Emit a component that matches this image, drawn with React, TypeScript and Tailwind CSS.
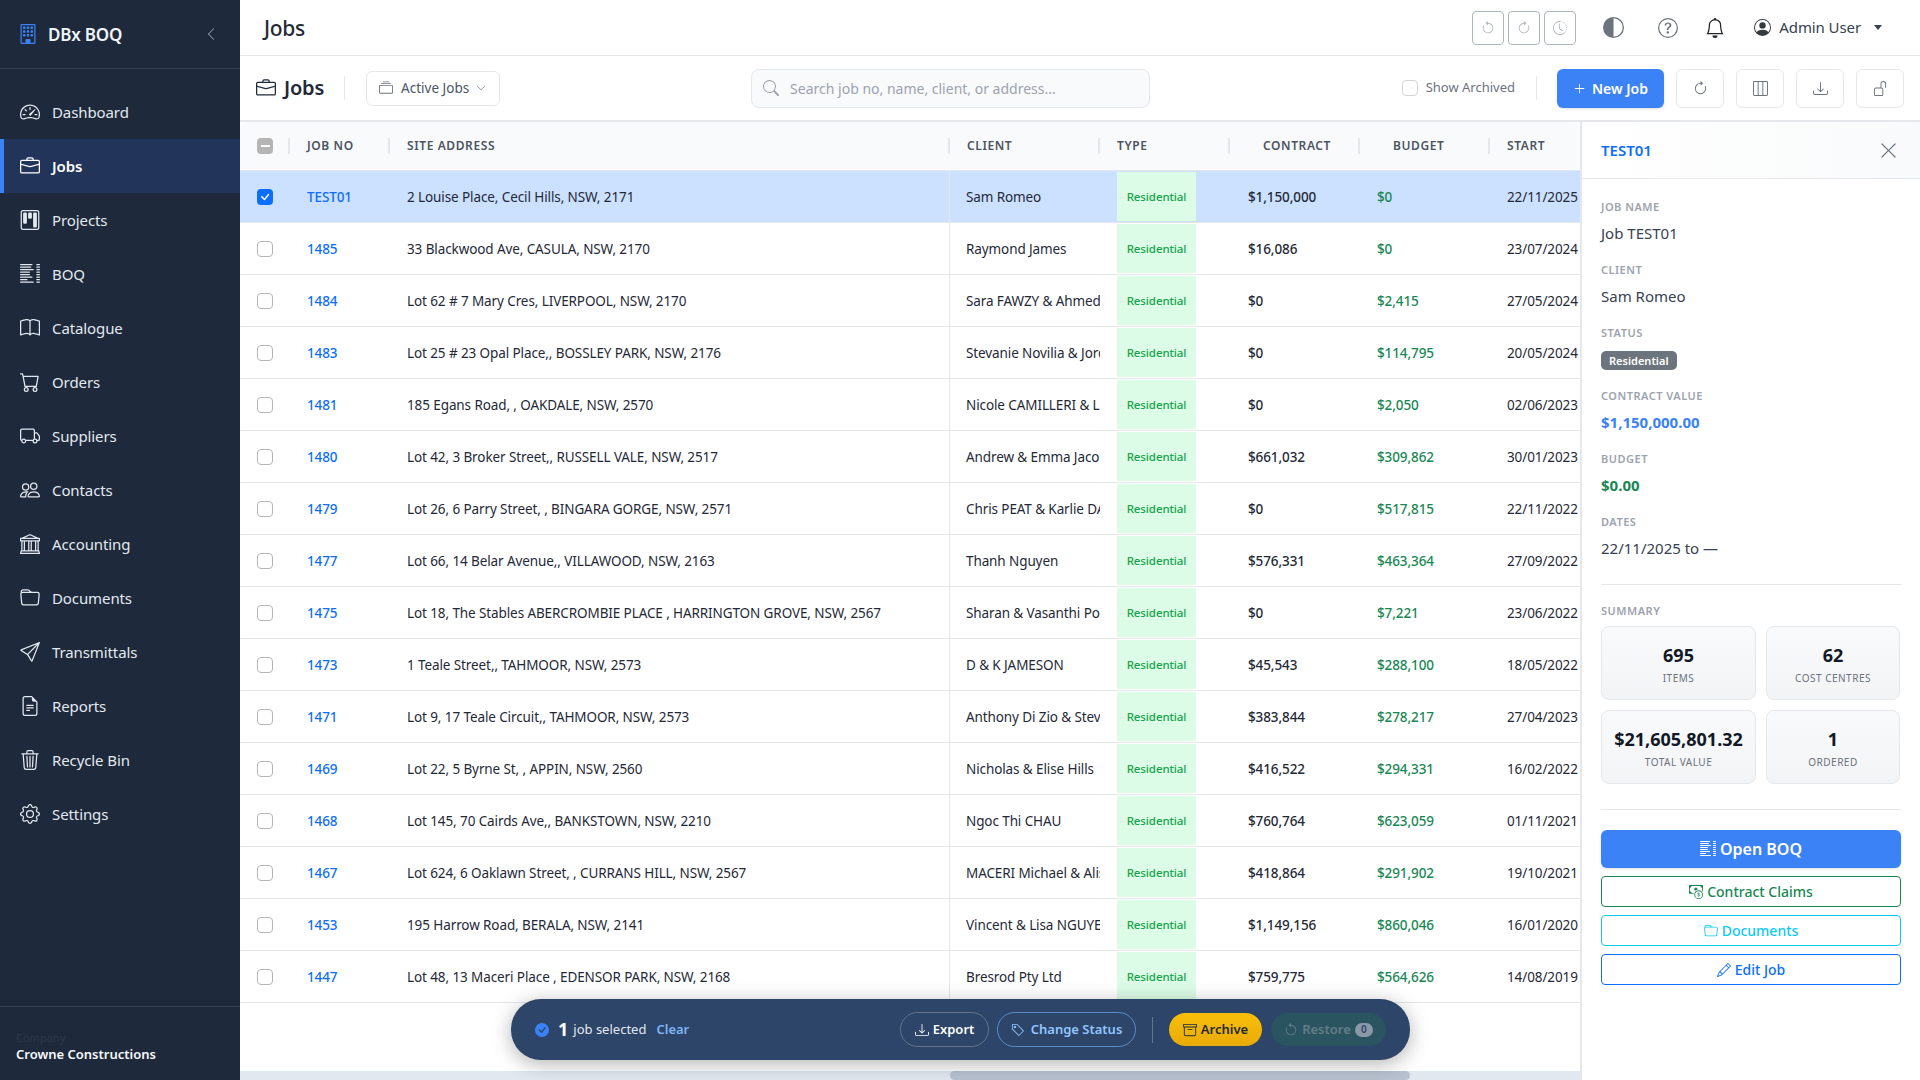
import React from "react";
import {
  BsSpeedometer2, BsBriefcase, BsKanban, BsListColumns, BsBook, BsCart, BsTruck, BsPeople, BsBank, BsFolder,
  BsSend, BsFileEarmarkText, BsTrash3, BsGear, BsBuilding, BsChevronLeft, BsChevronDown, BsCollection, BsSearch,
  BsArrowCounterclockwise, BsArrowClockwise, BsClockHistory, BsCircleHalf, BsQuestionCircle, BsBell, BsPersonCircle,
  BsPlusLg, BsLayoutThreeColumns, BsDownload, BsUnlock, BsXLg, BsCashCoin, BsPencil, BsTag, BsArchive,
  BsCheckCircleFill, BsCheck,
} from "react-icons/bs";

const navItems = [
  { label: "Dashboard", icon: BsSpeedometer2 },
  { label: "Jobs", icon: BsBriefcase, active: true },
  { label: "Projects", icon: BsKanban },
  { label: "BOQ", icon: BsListColumns },
  { label: "Catalogue", icon: BsBook },
  { label: "Orders", icon: BsCart },
  { label: "Suppliers", icon: BsTruck },
  { label: "Contacts", icon: BsPeople },
  { label: "Accounting", icon: BsBank },
  { label: "Documents", icon: BsFolder },
  { label: "Transmittals", icon: BsSend },
  { label: "Reports", icon: BsFileEarmarkText },
  { label: "Recycle Bin", icon: BsTrash3 },
  { label: "Settings", icon: BsGear },
];

const jobs = [
  ["TEST01", "2 Louise Place, Cecil Hills, NSW, 2171", "Sam Romeo", "$1,150,000", "$0", "22/11/2025"],
  ["1485", "33 Blackwood Ave, CASULA, NSW, 2170", "Raymond James", "$16,086", "$0", "23/07/2024"],
  ["1484", "Lot 62 # 7 Mary Cres, LIVERPOOL, NSW, 2170", "Sara FAWZY & Ahmed Ali", "$0", "$2,415", "27/05/2024"],
  ["1483", "Lot 25 # 23 Opal Place,, BOSSLEY PARK, NSW, 2176", "Stevanie Novilia & Jordan", "$0", "$114,795", "20/05/2024"],
  ["1481", "185 Egans Road, , OAKDALE, NSW, 2570", "Nicole CAMILLERI & Luke", "$0", "$2,050", "02/06/2023"],
  ["1480", "Lot 42, 3 Broker Street,, RUSSELL VALE, NSW, 2517", "Andrew & Emma Jacobs", "$661,032", "$309,862", "30/01/2023"],
  ["1479", "Lot 26, 6 Parry Street, , BINGARA GORGE, NSW, 2571", "Chris PEAT & Karlie DAY", "$0", "$517,815", "22/11/2022"],
  ["1477", "Lot 66, 14 Belar Avenue,, VILLAWOOD, NSW, 2163", "Thanh Nguyen", "$576,331", "$463,364", "27/09/2022"],
  ["1475", "Lot 18, The Stables ABERCROMBIE PLACE , HARRINGTON GROVE, NSW, 2567", "Sharan & Vasanthi Pon", "$0", "$7,221", "23/06/2022"],
  ["1473", "1 Teale Street,, TAHMOOR, NSW, 2573", "D & K JAMESON", "$45,543", "$288,100", "18/05/2022"],
  ["1471", "Lot 9, 17 Teale Circuit,, TAHMOOR, NSW, 2573", "Anthony Di Zio & Steven", "$383,844", "$278,217", "27/04/2023"],
  ["1469", "Lot 22, 5 Byrne St, , APPIN, NSW, 2560", "Nicholas & Elise Hills", "$416,522", "$294,331", "16/02/2022"],
  ["1468", "Lot 145, 70 Cairds Ave,, BANKSTOWN, NSW, 2210", "Ngoc Thi CHAU", "$760,764", "$623,059", "01/11/2021"],
  ["1467", "Lot 624, 6 Oaklawn Street, , CURRANS HILL, NSW, 2567", "MACERI Michael & Alison", "$418,864", "$291,902", "19/10/2021"],
  ["1453", "195 Harrow Road, BERALA, NSW, 2141", "Vincent & Lisa NGUYEN", "$1,149,156", "$860,046", "16/01/2020"],
  ["1447", "Lot 48, 13 Maceri Place , EDENSOR PARK, NSW, 2168", "Bresrod Pty Ltd", "$759,775", "$564,626", "14/08/2019"],
];

const gridCols = "grid grid-cols-[50px_100px_560px_150px_130px_130px_130px_130px]";

const Sidebar = () => (
  <aside className="w-[240px] shrink-0 bg-[#1e293b] flex flex-col text-[#e2e8f0]">
    <div className="h-[69px] border-b border-[#334155] flex items-center pl-[18px] pr-[22px]">
      <BsBuilding className="text-[#3b82f6] text-[20px]" />
      <span className="ml-[10px] pt-[1px] text-[17px] font-semibold text-[#f1f5f9] tracking-[-0.2px]">DBx BOQ</span>
      <BsChevronLeft className="ml-auto text-[#94a3b8] text-[14px]" />
    </div>
    <nav className="pt-4 flex-1">
      {navItems.map((item) => {
        const Icon = item.icon;
        return (
          <div
            key={item.label}
            className={
              item.active
                ? "h-[54px] flex items-center gap-[12px] pl-[20px] bg-[#22345a] border-l-4 border-[#3b82f6] text-white font-semibold"
                : "h-[54px] flex items-center gap-[12px] pl-[20px] border-l-4 border-transparent text-[#e2e8f0]"
            }
          >
            <Icon className="text-[20px] shrink-0 -ml-[4px]" />
            <span className="text-[15px] tracking-[-0.1px]">{item.label}</span>
          </div>
        );
      })}
    </nav>
    <div className="h-[74px] border-t border-[#334155] px-4 pt-[24px] shrink-0">
      <div className="text-[11px] leading-[14px] text-[#2c394c]">Company</div>
      <div className="text-[13px] leading-[18px] font-semibold text-[#f8fafc]">Crowne Constructions</div>
    </div>
  </aside>
);

const TopBar = () => (
  <header className="h-[56px] shrink-0 bg-white border-b border-[#e5e7eb] flex items-center pl-[24px] pr-[38px]">
    <h1 className="pt-[2px] text-[21px] font-medium text-[#1f2937] tracking-[-0.3px]">Jobs</h1>
    <div className="ml-auto flex items-center">
      <div className="flex gap-[4px]">
        {[BsArrowCounterclockwise, BsArrowClockwise, BsClockHistory].map((Icon, i) => (
          <button key={i} className="w-[32px] h-[34px] rounded-[4px] border border-[#adb5bd] flex items-center justify-center text-[#b5bac0] text-[14px]">
            <Icon />
          </button>
        ))}
      </div>
      <BsCircleHalf className="ml-[27px] text-[21px] text-[#6c757d]" />
      <BsQuestionCircle className="ml-[34px] text-[20px] text-[#6c757d]" />
      <BsBell className="ml-[27px] text-[20px] text-[#212529]" />
      <BsPersonCircle className="ml-[29px] text-[17px] text-[#343a40]" />
      <span className="ml-[8px] text-[15px] text-[#374151] tracking-[-0.1px]">Admin User</span>
      <span className="ml-[13px] border-x-[4px] border-t-[5px] border-x-transparent border-t-[#374151]" />
    </div>
  </header>
);

const ToolButton = ({ icon: Icon }: { icon: React.ElementType }) => (
  <button className="w-[48px] h-[39px] rounded-[6px] border border-[#e5e7eb] bg-white flex items-center justify-center text-[#6b7280] text-[15px]">
    <Icon />
  </button>
);

const Toolbar = () => (
  <div className="h-[66px] shrink-0 bg-white border-b-2 border-[#e5e7eb] flex items-center pl-[16px] pr-[16px]">
    <BsBriefcase className="text-[20px] text-[#1f2937]" />
    <span className="ml-[8px] text-[20px] font-semibold text-[#1f2937] tracking-[-0.2px]">Jobs</span>
    <div className="ml-[20px] w-px h-[24px] bg-[#e5e7eb]" />
    <button className="ml-[21px] w-[134px] h-[35px] rounded-[6px] border border-[#e5e7eb] bg-white flex items-center pl-[12px] text-[13.5px] text-[#4b5563]">
      <BsCollection className="text-[14px] text-[#6b7280]" />
      <span className="ml-[8px]">Active Jobs</span>
      <BsChevronDown className="ml-[7px] text-[10px] text-[#6b7280]" />
    </button>
    <div className="ml-[251px] w-[399px] h-[39px] rounded-[8px] border border-[#e5e7eb] bg-[#f9fafb] flex items-center pl-[11px] text-[14px] text-[#9ca3af]">
      <BsSearch className="text-[16px] text-[#9ca3af]" />
      <span className="ml-[11px]">Search job no, name, client, or address...</span>
    </div>
    <div className="ml-auto flex items-center">
      <span className="w-[16px] h-[16px] rounded-[4px] border border-[#d1d5db] bg-white" />
      <span className="ml-[8px] text-[13px] text-[#6b7280]">Show Archived</span>
      <div className="ml-[21px] w-px h-[24px] bg-[#e5e7eb]" />
      <button className="ml-[20px] w-[107px] h-[39px] rounded-[6px] bg-[#3b82f6] text-white text-[14px] font-semibold flex items-center justify-center gap-[6px] shadow-sm">
        <BsPlusLg className="text-[13px]" />
        New Job
      </button>
      <div className="ml-[12px] flex gap-[12px]">
        <ToolButton icon={BsArrowClockwise} />
        <ToolButton icon={BsLayoutThreeColumns} />
        <ToolButton icon={BsDownload} />
        <ToolButton icon={BsUnlock} />
      </div>
    </div>
  </div>
);

const Handle = () => <span className="absolute right-0 top-[16px] w-[2px] h-[16px] bg-[#e5e7eb]" />;

const HeadCell = ({ label, cls = "pl-[17px]", handle = true }: { label?: string; cls?: string; handle?: boolean }) => (
  <div className={`relative flex items-center text-[12px] font-semibold text-[#4b5563] tracking-[0.6px] ${cls}`}>
    {label}
    {handle && <Handle />}
  </div>
);

const JobTable = () => (
  <div className="relative flex-1 min-w-0 overflow-hidden bg-white">
    <div className="rounded-tl-[8px] rounded-tr-[8px] overflow-hidden">
      <div className={`${gridCols} h-[49px] bg-[#f9fafb] border-b border-[#e5e7eb]`}>
        <div className="relative flex items-center pl-[17px]">
          <span className="w-[16px] h-[16px] rounded-[4px] bg-[#b5b5b5] flex items-center justify-center">
            <span className="w-[9px] h-[2px] bg-white" />
          </span>
          <Handle />
        </div>
        <HeadCell label="JOB NO" />
        <HeadCell label="SITE ADDRESS" />
        <HeadCell label="CLIENT" />
        <HeadCell label="TYPE" />
        <HeadCell label="CONTRACT" cls="pl-[33px]" />
        <HeadCell label="BUDGET" cls="pl-[33px]" />
        <HeadCell label="START" handle={false} />
      </div>
    </div>
    {jobs.map((row, i) => (
      <div
        key={row[0]}
        className={`${gridCols} h-[52px] border-b border-[#e5e7eb] text-[13.5px] tracking-[-0.1px] text-[#1f2937] ${i === 0 ? "bg-[#cce0ff]" : "bg-white"}`}
      >
        <div className="flex items-center pl-[17px]">
          {i === 0 ? (
            <span className="w-[16px] h-[16px] rounded-[4px] bg-[#0d6efd] flex items-center justify-center text-white text-[16px]">
              <BsCheck />
            </span>
          ) : (
            <span className="w-[16px] h-[16px] rounded-[4px] border border-[#b5b5b5] bg-white" />
          )}
        </div>
        <div className="flex items-center pt-[1px] pl-[17px] text-[#0d6efd] font-medium">{row[0]}</div>
        <div className="flex items-center pt-[1px] pl-[17px] border-r border-[#e5e7eb] whitespace-nowrap">{row[1]}</div>
        <div className="flex items-center pt-[1px] pl-[16px] overflow-hidden whitespace-nowrap">{row[2]}</div>
        <div className="pl-[17px] py-[1px] flex">
          <div className="w-[79px] bg-[#dcfce7] text-[#16a34a] text-[11.5px] font-medium flex items-center justify-center">Residential</div>
        </div>
        <div className="flex items-center pt-[1px] pl-[18px] font-medium">{row[3]}</div>
        <div className="flex items-center pt-[1px] pl-[17px] font-medium text-[#198754]">{row[4]}</div>
        <div className="flex items-center pt-[1px] pl-[17px]">{row[5]}</div>
      </div>
    ))}
    <div className="absolute left-0 right-0 bottom-0 h-[9px] bg-[#e2e8f0]">
      <div className="ml-[710px] w-[460px] h-full rounded-full bg-[#b8c2d0]" />
    </div>
  </div>
);

const Field = ({ label, children }: { label: string; children: React.ReactNode }) => (
  <div className="h-[63px]">
    <div className="pt-[4px] text-[11px] leading-[16px] font-semibold tracking-[0.5px] text-[#9ca3af] uppercase">{label}</div>
    <div className="mt-[7px] text-[15px] leading-[22px] text-[#374151]">{children}</div>
  </div>
);

const Stat = ({ value, label }: { value: string; label: string }) => (
  <div className="h-[74px] rounded-[8px] border border-[#e5e7eb] bg-gradient-to-b from-[#f9fafb] to-[#f3f4f6] flex flex-col items-center justify-center">
    <div className="text-[18px] leading-[26px] font-bold text-[#111827]">{value}</div>
    <div className="mt-[3px] text-[10px] leading-[14px] tracking-[0.5px] text-[#6b7280] uppercase">{label}</div>
  </div>
);

const DetailPanel = () => (
  <aside className="w-[340px] shrink-0 bg-white border-l-2 border-[#e5e7eb] flex flex-col">
    <div className="h-[57px] shrink-0 border-b border-[#e5e7eb] bg-gradient-to-r from-white to-[#f9fafb] flex items-center pl-[19px] pr-[22px]">
      <span className="text-[15px] font-semibold text-[#0d6efd]">TEST01</span>
      <BsXLg className="ml-auto text-[19px] text-[#6b7280]" />
    </div>
    <div className="px-[19px] pt-[16px]">
      <Field label="Job Name">Job TEST01</Field>
      <Field label="Client">Sam Romeo</Field>
      <Field label="Status">
        <span className="inline-flex items-center h-[19px] px-[8px] rounded-[5px] bg-[#6c757d] text-white text-[11px] font-semibold leading-none">Residential</span>
      </Field>
      <Field label="Contract Value">
        <span className="font-bold text-[#3b82f6]">$1,150,000.00</span>
      </Field>
      <Field label="Budget">
        <span className="font-bold text-[#198754]">$0.00</span>
      </Field>
      <Field label="Dates">22/11/2025 to —</Field>
      <div className="mt-[11px] border-t border-[#e5e7eb]" />
      <div className="mt-[18px] text-[11px] leading-[16px] font-semibold tracking-[0.5px] text-[#9ca3af]">SUMMARY</div>
      <div className="mt-[7px] grid grid-cols-[155px_134px] gap-[10px]">
        <Stat value="695" label="Items" />
        <Stat value="62" label="Cost Centres" />
        <Stat value="$21,605,801.32" label="Total Value" />
        <Stat value="1" label="Ordered" />
      </div>
      <div className="mt-[25px] border-t border-[#e5e7eb]" />
      <button className="mt-[20px] w-full h-[38px] rounded-[6px] bg-[#3b82f6] text-white text-[16px] font-semibold flex items-center justify-center gap-[4px] shadow-sm">
        <BsListColumns /> Open BOQ
      </button>
      <button className="mt-[8px] w-full h-[31px] rounded-[4px] border border-[#198754] text-[#198754] text-[14px] font-medium flex items-center justify-center gap-[4px]">
        <BsCashCoin /> Contract Claims
      </button>
      <button className="mt-[8px] w-full h-[31px] rounded-[4px] border border-[#0dcaf0] text-[#0dcaf0] text-[14px] font-medium flex items-center justify-center gap-[4px]">
        <BsFolder /> Documents
      </button>
      <button className="mt-[8px] w-full h-[31px] rounded-[4px] border border-[#0d6efd] text-[#0d6efd] text-[14px] font-medium flex items-center justify-center gap-[4px]">
        <BsPencil /> Edit Job
      </button>
    </div>
  </aside>
);

const SelectionBar = () => (
  <div className="absolute left-[271px] top-[999px] w-[899px] h-[61px] rounded-[30px] bg-[#2c4568] shadow-[0_4px_20px_rgba(0,0,0,0.3)] flex items-center pl-[24px] pr-[24px] text-[13px]">
    <BsCheckCircleFill className="text-[14px] text-[#3b82f6]" />
    <span className="ml-[9px] text-[18px] font-bold text-white">1</span>
    <span className="ml-[5px] text-[#e2e8f0]">job selected</span>
    <span className="ml-[10px] font-semibold text-[#7fb6f5]">Clear</span>
    <button className="ml-auto w-[89px] h-[35px] rounded-full border border-[#64748b] text-white font-semibold flex items-center justify-center gap-[4px]">
      <BsDownload className="text-[14px]" />
      Export
    </button>
    <button className="ml-[8px] w-[139px] h-[35px] rounded-full border border-[#5a8cc8] text-[#93c5fd] font-semibold flex items-center justify-center gap-[6px]">
      <BsTag className="text-[14px]" />
      Change Status
    </button>
    <div className="ml-[16px] w-px h-[26px] bg-[#64748b]" />
    <button className="ml-[16px] w-[93px] h-[33px] rounded-full bg-gradient-to-b from-[#f9bf0a] to-[#e8ab08] text-[#1f2937] font-semibold flex items-center justify-center gap-[4px]">
      <BsArchive className="text-[14px]" />
      Archive
    </button>
    <button className="ml-[9px] w-[115px] h-[33px] rounded-full bg-[#2a5560] text-[#627d88] font-semibold flex items-center justify-center gap-[4px]">
      <BsArrowCounterclockwise className="text-[14px]" />
      Restore
      <span className="w-[18px] h-[14px] rounded-full bg-[#8b98a8] text-[#2c4568] text-[10px] flex items-center justify-center">0</span>
    </button>
  </div>
);

export default function App() {
  return (
    <div className="w-[1920px] h-[1080px] overflow-hidden flex font-['Noto_Sans',sans-serif] bg-white">
      <Sidebar />
      <main className="relative flex-1 min-w-0 flex flex-col">
        <TopBar />
        <Toolbar />
        <div className="flex-1 min-h-0 flex">
          <JobTable />
          <DetailPanel />
        </div>
        <SelectionBar />
      </main>
    </div>
  );
}
